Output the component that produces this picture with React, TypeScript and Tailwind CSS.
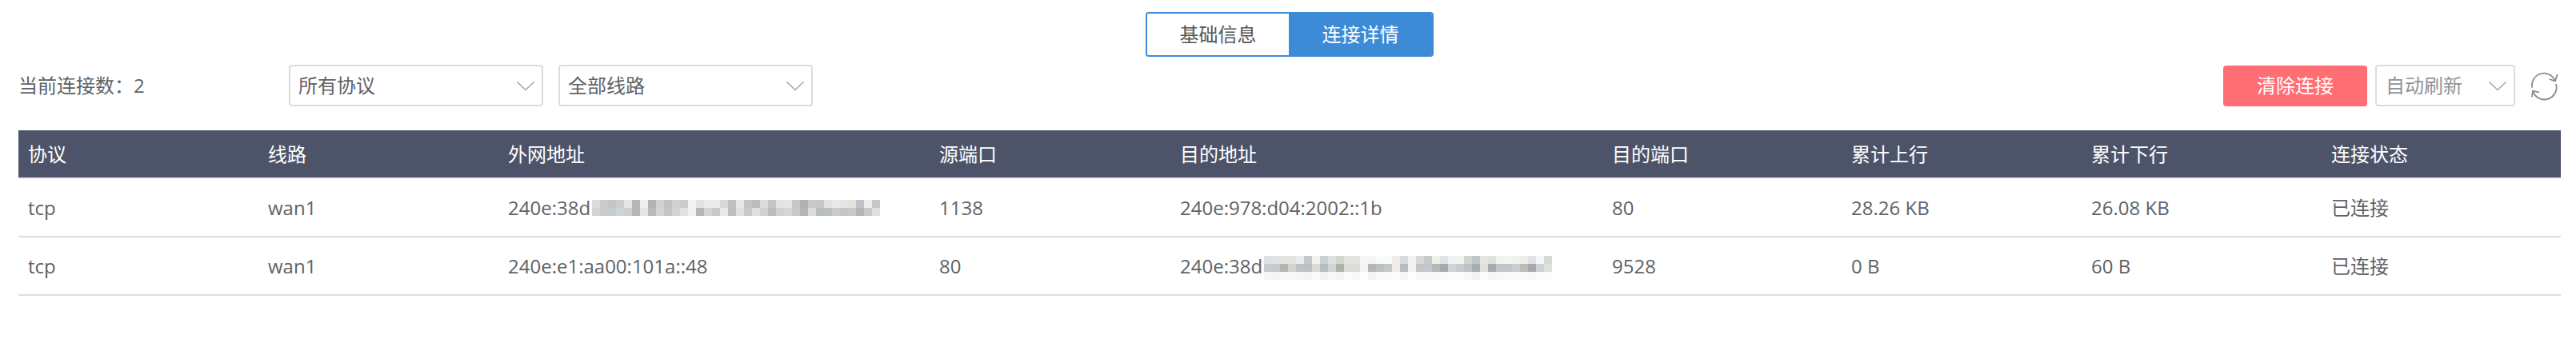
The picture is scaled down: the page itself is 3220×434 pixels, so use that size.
const FONT = "font-['Open_Sans','Noto_Sans_CJK_SC',sans-serif]"

const COLUMNS = "grid grid-cols-[300px_300px_539px_301px_540px_299px_300px_300px_299px]"

const HEADERS = ["协议", "线路", "外网地址", "源端口", "目的地址", "目的端口", "累计上行", "累计下行", "连接状态"]

const MOSAIC_A = [
  "dcdcda c9cbcd c4c5c6 cbcccc e4e5e6 b4b6b8 eef0ef b0b3b3 cfd0cf bcc2c5 cfd0cf c9cac9 f2f2f3 e0e1e0 ebebea ebebeb d8d9d9 bfc1c1 e8e8e8 c2c5c7 bcbcbb dcddd8 c4c6cc e2e3e3 e4e5e4 c6c8c5 b0b1b3 c8cac8 c6c8c8 e0e2e4 e9ebea e5e7e4 e1e2da c0c3c4 ebeced c6c8c6",
  "d5d6d4 c8cacb c8cacb ced5d8 cfd0cb b4b6b8 e4e6e4 b8bbbb d4d4d3 c1c6c9 d3d4d3 e0e2e1 f0f0f1 b8b8b3 cfd5d8 c9c9c8 e8e9e8 bcbebe e0e1df c8c9c8 e0e1df d0d2d0 b9bcbd cfd1d0 d6d8d8 c7c9c5 b4b6b6 dcdddb b9bcbc bcbfbf c9cbc8 c4c7c3 c8cac4 b4b6b6 c7cacc dde0dc",
]

const MOSAIC_B = [
  "dedfde dfe3e4 e4e4e0 e4e5e1 ecedeb c4cacb f3f4f1 c8d0d3 dfe0dc d4d5cf e4e5e3 e3e4e2 f5f8f6 f4f5f3 fbfbf9 fbfbfa efebe9 d8dbdb f3f4f2 d8d9d6 c6cbcb f1f0e9 dde3e6 eff2f3 f2f4f3 d3d5cd c0c6c8 e5e6e1 dfe1df f2f3f1 f4f5ef f0f1eb f0efe6 dfe2e6 f5f7f5 d8d9d4",
  "c8cbcc c4cacd b2b4b4 d1d3d3 bfc3c5 bcc1c1 dbdbd5 b8bcc2 d0d5d7 afb3ac dadcd9 dcddda f3f5f4 b4b6b6 bcc0c1 c4c8c9 eeecea b8bebe f3f3f2 c2c5c6 c4c7c8 b5b9ba a6a9ac cfd3d6 c9cccb c0c3c3 a9aeb1 dfe0de a7abac c1c5c8 c3c6c8 cbced0 bbbcb9 a6a8ae ccd2d5 e0e1dd",
  "f6f6f6 f5f5f5 f7f7f7 f8f8f8 f6f6f6 f4f4f4 f9f9f9 f3f3f3 f8f8f8 f5f5f5 fbfbfb f8f8f8 fdfdfd f5f5f5 f9f9f9 fafafa fcfcfc f6f6f6 fdfdfd f7f7f7 f8f8f8 f7f7f7 f9f9f9 fbfbfb fcfcfc f7f7f7 f3f3f3 fbfbfb f6f6f6 f8f8f8 f9f9f9 f9f9f9 f9f9f9 f7f7f7 fcfcfc fcfcfc",
]

function Mosaic({ rows }: { rows: string[] }) {
  return (
    <svg width={360} height={rows.length * 10} className="shrink-0" shapeRendering="crispEdges">
      {rows.map((row, y) =>
        row.split(" ").map((color, x) => (
          <rect key={`${y}-${x}`} x={x * 10} y={y * 10} width={10} height={10} fill={`#${color}`} />
        )),
      )}
    </svg>
  )
}

function MaskedAddress({ rows, top }: { rows: string[]; top: string }) {
  return (
    <div className="relative flex items-center">
      <span className="w-[105px] overflow-hidden whitespace-nowrap">240e:38d</span>
      <div className={`absolute left-[105px] ${top}`}>
        <Mosaic rows={rows} />
      </div>
    </div>
  )
}

function Chevron({ className }: { className?: string }) {
  return (
    <svg width="24" height="13" viewBox="0 0 24 13" fill="none" stroke="#a3a6ab" strokeWidth="1.6" className={className}>
      <path d="M1.5 1.5 L12 11.5 L22.5 1.5" />
    </svg>
  )
}

function Select({ label, width, muted }: { label: string; width: string; muted?: boolean }) {
  return (
    <div
      className={`${width} ${muted ? "pl-[11px] text-[#8f9399]" : "pl-[10px] text-[#606266]"} h-[52px] flex items-center justify-between pr-[8px] bg-white border-2 border-[#dcdcdc] rounded-[4px]`}
    >
      <span className="whitespace-nowrap">{label}</span>
      <Chevron />
    </div>
  )
}

function RefreshIcon() {
  return (
    <svg width="40" height="40" viewBox="0 0 40 40" fill="none" stroke="#8a8a8a" strokeWidth="1.8">
      <path d="M5.3 22.7 A15 15 0 0 1 34 14.3" />
      <path d="M36.7 6 L34 14.3 L26.7 12" />
      <path d="M35 18 A15 15 0 0 1 6 26.7" />
      <path d="M5 34.3 L6 26.7 L14 28.7" />
    </svg>
  )
}

const ROWS = [
  ["tcp", "wan1", <MaskedAddress rows={MOSAIC_A} top="top-[8.5px]" />, "1138", "240e:978:d04:2002::1b", "80", "28.26 KB", "26.08 KB", "已连接"],
  ["tcp", "wan1", "240e:e1:aa00:101a::48", "80", <MaskedAddress rows={MOSAIC_B} top="top-[5.5px]" />, "9528", "0 B", "60 B", "已连接"],
]

export default function App() {
  return (
    <div className={`${FONT} min-h-[434px] bg-white text-[24px] text-[#606266]`}>
      {/* Tabs */}
      <div className="flex justify-center pt-[15px] pl-[4px]">
        <div className="flex h-[56px] w-[360px] rounded-[4px] border-2 border-[#3d8ad6] overflow-hidden">
          <div className="w-[177px] flex items-center justify-center bg-white text-[#555]">基础信息</div>
          <div className="flex-1 flex items-center justify-center bg-[#3d8ad6] text-white">连接详情</div>
        </div>
      </div>

      {/* Toolbar */}
      <div className="flex items-center h-[52px] mt-[10px] pl-[23px] pr-[20px]">
        <span className="w-[338px] whitespace-nowrap">当前连接数：2</span>
        <div className="flex gap-[19px]">
          <Select label="所有协议" width="w-[318px]" />
          <Select label="全部线路" width="w-[318px]" />
        </div>
        <div className="ml-auto flex items-center">
          <button className="w-[180px] h-[51px] rounded-[4px] bg-[#ff6d75] text-white">清除连接</button>
          <div className="ml-[10px]">
            <Select label="自动刷新" width="w-[175px]" muted />
          </div>
          <div className="ml-[16px]">
            <RefreshIcon />
          </div>
        </div>
      </div>

      {/* Table */}
      <div className="mt-[30px] mx-[23px] w-[3178px]">
        <div className={`${COLUMNS} h-[61px] items-center bg-[#4d5469] bg-clip-padding border-b-2 border-[#eeeeee] text-white`}>
          {HEADERS.map((h) => (
            <div key={h} className="pl-[12px]">
              {h}
            </div>
          ))}
        </div>
        {ROWS.map((row, i) => (
          <div key={i} className={`${COLUMNS} h-[73px] items-center border-b-2 border-[#dedede]`}>
            {row.map((cell, j) => (
              <div key={j} className="pl-[12px]">
                {cell}
              </div>
            ))}
          </div>
        ))}
      </div>
    </div>
  )
}
